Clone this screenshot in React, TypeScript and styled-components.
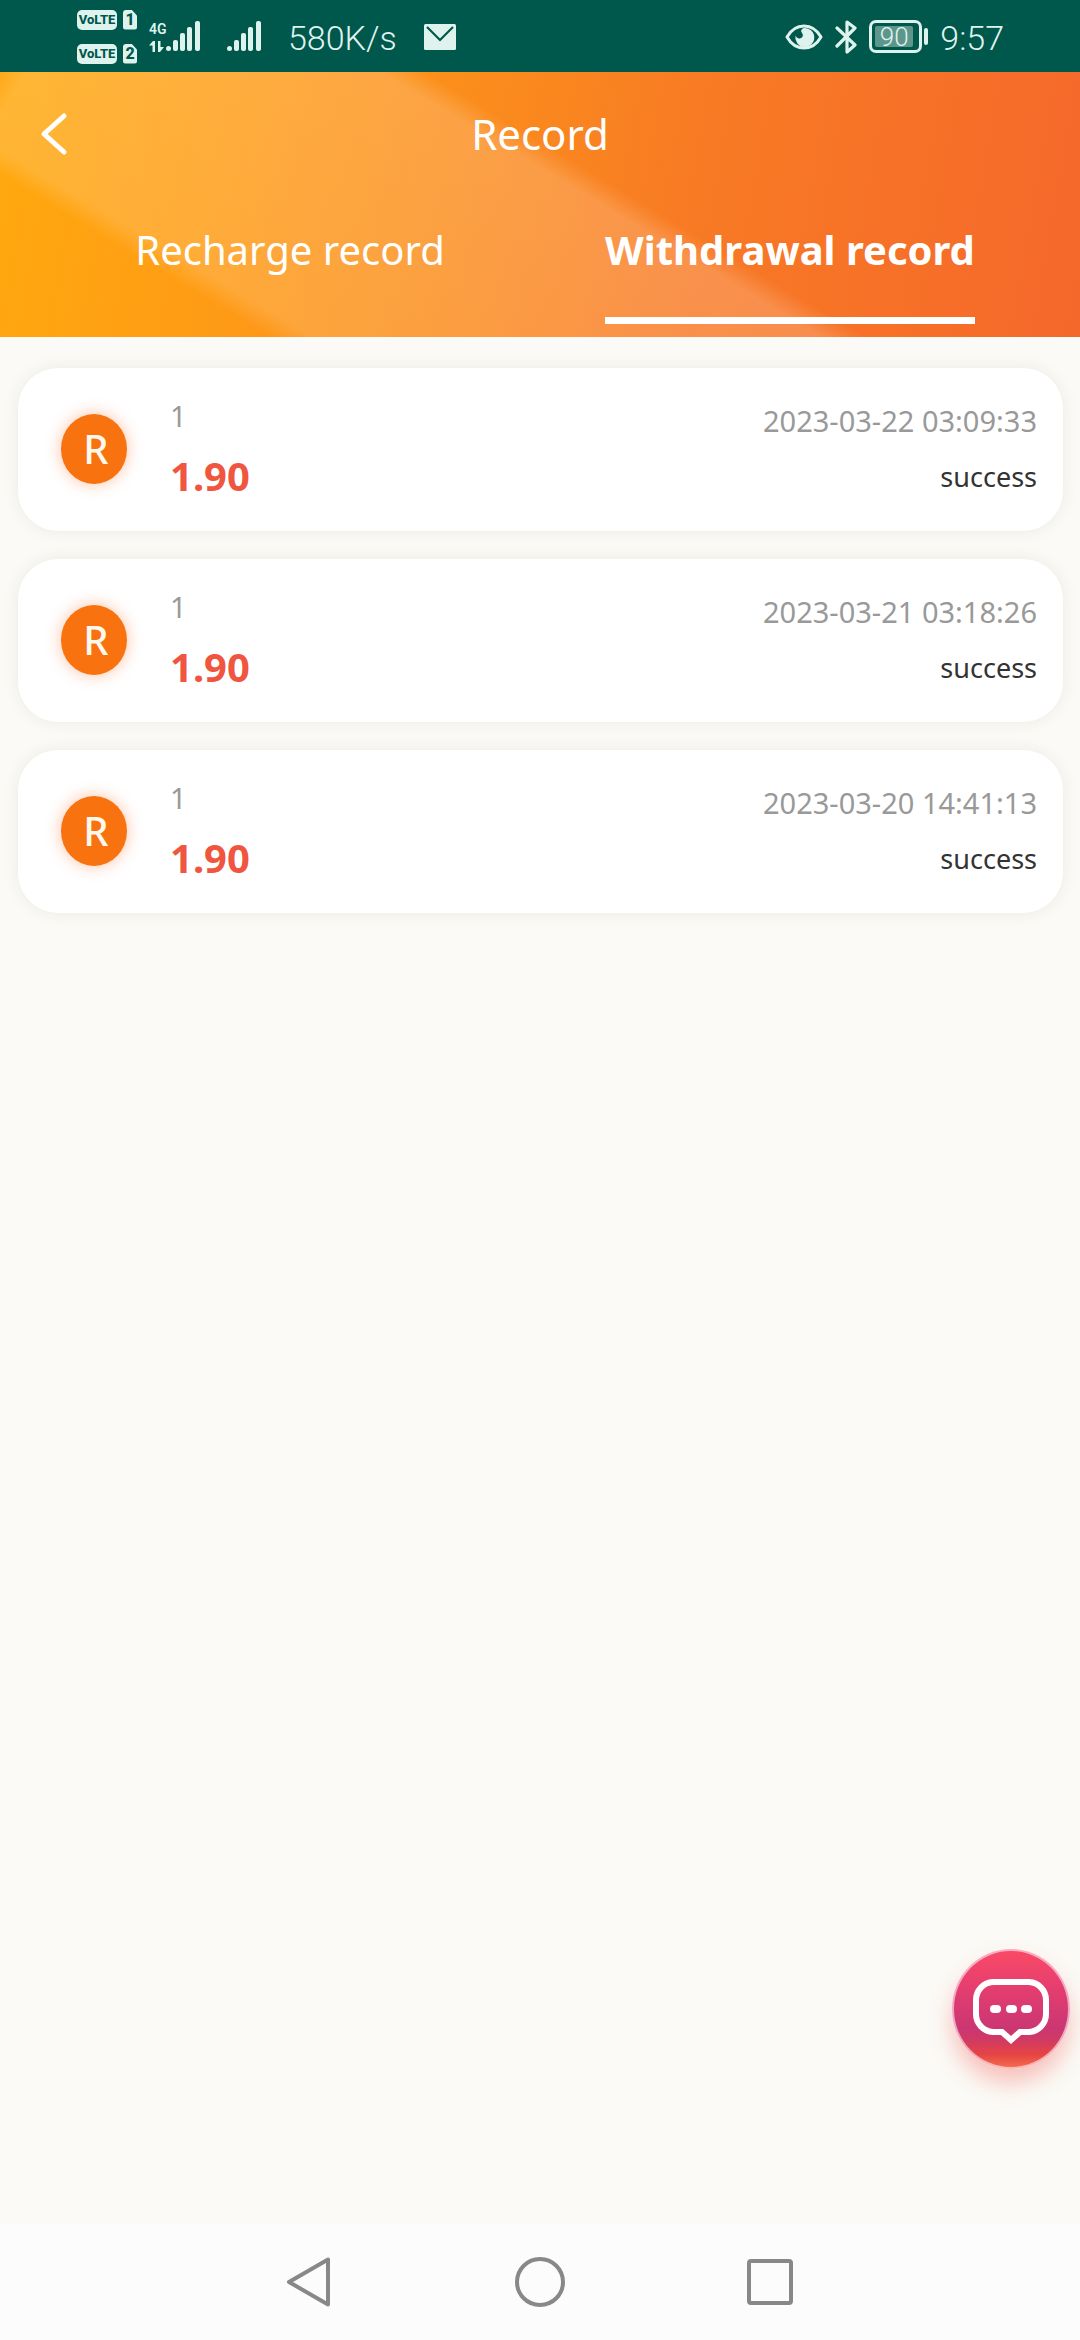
import React, { useState } from "react";
import styled, { createGlobalStyle } from "styled-components";

const GlobalStyle = createGlobalStyle`
  * { box-sizing: border-box; }
  body {
    margin: 0;
    background: #fbfaf6;
    font-family: "Noto Sans", "Open Sans", Roboto, sans-serif;
  }
  button {
    font: inherit;
    color: inherit;
    background: none;
    border: 0;
    padding: 0;
    cursor: pointer;
  }
`;

const ink = "#dff3ee";

const Page = styled.div`
  min-height: 100vh;
  display: flex;
  flex-direction: column;
`;

const StatusBar = styled.div`
  height: 72px;
  padding: 1px 76px 0 77px;
  display: flex;
  justify-content: space-between;
  align-items: center;
  background: #00574b;
  color: ${ink};
`;

const StatusGroup = styled.div<{ $gap: number }>`
  display: flex;
  align-items: center;
  gap: ${(p) => p.$gap}px;
`;

const StatusText = styled.span`
  padding-top: 2px;
  font-family: Roboto, sans-serif;
  font-weight: 300;
  font-size: 34px;
  line-height: 40px;
`;

const SimStack = styled.div`
  display: flex;
  flex-direction: column;
  gap: 14px;
`;

const SimLine = styled.div`
  display: flex;
  gap: 6px;
  font-family: Roboto, sans-serif;
  font-weight: 800;
  line-height: 20px;
  text-align: center;
  color: #00574b;
`;

const Volte = styled.span`
  width: 40px;
  height: 20px;
  border-radius: 5px;
  background: ${ink};
  font-size: 13px;
`;

const SimNumber = styled.span`
  width: 14px;
  height: 20px;
  border-radius: 3px;
  background: ${ink};
  clip-path: polygon(0 0, 60% 0, 100% 30%, 100% 100%, 0 100%);
  font-size: 16px;
`;

const NetworkType = styled.div`
  width: 17px;
  display: flex;
  flex-direction: column;
  gap: 4px;
  font-family: Roboto, sans-serif;
  font-weight: 600;
  font-size: 14px;
  line-height: 16px;
`;

const Network = styled.div`
  display: flex;
  align-items: flex-end;
`;

const Battery = styled.div`
  display: flex;
  align-items: center;
  gap: 2px;
`;

const BatteryBody = styled.div`
  width: 53px;
  height: 33px;
  padding: 3px;
  border: 3px solid ${ink};
  border-radius: 7px;
`;

const BatteryLevel = styled.div`
  width: 38px;
  height: 21px;
  border-radius: 2px;
  background: #5f968c;
  font-family: Roboto, sans-serif;
  font-weight: 300;
  font-size: 26px;
  line-height: 22px;
  text-align: center;
`;

const BatteryTip = styled.div`
  width: 4px;
  height: 17px;
  border-radius: 2px;
  background: ${ink};
`;

const Header = styled.header`
  height: 265px;
  display: flex;
  flex-direction: column;
  color: #fff;
  background:
    linear-gradient(120deg, rgba(255, 165, 16, 0.8) 0, rgba(255, 165, 16, 0) 22px),
    linear-gradient(31deg, transparent 139px, rgba(255, 255, 255, 0.15) 161px, rgba(255, 255, 255, 0.18) 423px, transparent 446px),
    linear-gradient(100deg, #ffa90e 0%, #ff9d15 20%, #fb8d1c 42%, #f87a24 64%, #f5682b 100%);
`;

const TitleBar = styled.div`
  height: 124px;
  padding: 0 36px;
  display: grid;
  grid-template-columns: 44px 1fr 44px;
  align-items: center;
`;

const BackButton = styled.button`
  height: 60px;
  display: flex;
  align-items: center;
`;

const Title = styled.h1`
  margin: 0;
  font-size: 42px;
  font-weight: 400;
  line-height: 60px;
  text-align: center;
`;

const Tabs = styled.div`
  flex: 1;
  padding: 0 40px;
  display: grid;
  grid-template-columns: 1fr 1fr;
  justify-items: center;
`;

const Tab = styled.button<{ $active: boolean }>`
  height: 128px;
  padding: 24px 0 0;
  display: flex;
  align-items: flex-start;
  font-size: 40px;
  line-height: 60px;
  font-weight: ${(p) => (p.$active ? 700 : 400)};
  border-bottom: 7px solid ${(p) => (p.$active ? "#fff" : "transparent")};
`;

const List = styled.ul`
  flex: 1;
  margin: 0;
  padding: 31px 17px 31px 18px;
  display: flex;
  flex-direction: column;
  gap: 28px;
  list-style: none;
`;

const Card = styled.li`
  height: 163px;
  padding: 0 26px 2px 43px;
  display: flex;
  align-items: center;
  gap: 43px;
  border-radius: 40px;
  background: #fff;
  box-shadow: 0 0 16px rgba(60, 50, 20, 0.08);
`;

const Avatar = styled.span`
  width: 66px;
  height: 70px;
  padding-left: 4px;
  border-radius: 50%;
  background: #f8730f;
  box-shadow: 0 0 16px rgba(248, 100, 30, 0.4);
  color: #fff8ec;
  font-size: 40px;
  font-weight: 500;
  line-height: 70px;
  text-align: center;
`;

const Column = styled.div<{ $gap: number; $end?: boolean }>`
  display: flex;
  flex-direction: column;
  gap: ${(p) => p.$gap}px;
  margin-left: ${(p) => (p.$end ? "auto" : "0")};
  text-align: ${(p) => (p.$end ? "right" : "left")};
`;

const Muted = styled.span`
  color: #999;
  font-size: 29px;
  line-height: 44px;
`;

const Amount = styled.strong`
  color: #ef553f;
  font-size: 40px;
  line-height: 56px;
  font-weight: 700;
`;

const Status = styled.span`
  color: #333;
  font-size: 27px;
  line-height: 44px;
`;

const ChatButton = styled.button`
  position: fixed;
  right: 10px;
  bottom: 271px;
  width: 118px;
  height: 120px;
  display: grid;
  place-items: center;
  border-radius: 50%;
  border: 2px solid rgba(255, 225, 240, 0.65);
  background: linear-gradient(#fb4a66 0%, #e33d70 35%, #cb3672 66%, #d03a62 76%, #e64444 88%, #f4714d 100%) border-box;
  box-shadow: 0 14px 22px rgba(240, 90, 80, 0.35);
`;

const ChatIcon = styled.svg`
  margin-top: 4px;
`;

const NavBar = styled.nav`
  height: 116px;
  display: flex;
  justify-content: center;
  align-items: center;
  gap: 178px;
  background: #fcfcfc;
`;

const NavButton = styled.button`
  width: 52px;
  height: 52px;
`;

const SignalBars = () => (
  <svg width="34" height="31" viewBox="0 0 34 31" fill={ink} aria-hidden="true">
    <rect x="0" y="25" width="5" height="5" rx="2.5" />
    <rect x="7" y="19" width="5" height="11" rx="2" />
    <rect x="14" y="12" width="5" height="18" rx="2" />
    <rect x="21" y="6" width="5" height="24" rx="2" />
    <rect x="29" y="0" width="5" height="30" rx="2" />
  </svg>
);

const records = [
  { id: "1", amount: "1.90", time: "2023-03-22 03:09:33", status: "success" },
  { id: "1", amount: "1.90", time: "2023-03-21 03:18:26", status: "success" },
  { id: "1", amount: "1.90", time: "2023-03-20 14:41:13", status: "success" },
];

const tabs = ["Recharge record", "Withdrawal record"];

export default function App() {
  const [active, setActive] = useState(1);

  return (
    <Page>
      <GlobalStyle />
      <StatusBar>
        <StatusGroup $gap={27}>
          <StatusGroup $gap={12}>
            <SimStack>
              <SimLine>
                <Volte>VoLTE</Volte>
                <SimNumber>1</SimNumber>
              </SimLine>
              <SimLine>
                <Volte>VoLTE</Volte>
                <SimNumber>2</SimNumber>
              </SimLine>
            </SimStack>
            <Network>
              <NetworkType>
                4G
                <svg width="15" height="11" viewBox="0 0 15 11" fill={ink} aria-hidden="true">
                  <path d="M0 4.5 4 0h2v11H3.5V4.5ZM9 0h2.5v6H15L11 11H9Z" />
                </svg>
              </NetworkType>
              <SignalBars />
            </Network>
          </StatusGroup>
          <SignalBars />
          <StatusText>580K/s</StatusText>
          <svg width="32" height="26" viewBox="0 0 32 26" aria-hidden="true">
            <rect width="32" height="26" rx="1.5" fill={ink} />
            <path d="M3 3 16 16 29 3" fill="none" stroke="#00574b" strokeWidth="2.2" />
          </svg>
        </StatusGroup>
        <StatusGroup $gap={12}>
          <svg width="38" height="26" viewBox="0 0 38 26" aria-hidden="true">
            <path d="M2 13C6 6 12 2 19 2s13 4 17 11c-4 7-10 11-17 11S6 20 2 13Z" fill="none" stroke={ink} strokeWidth="3" strokeLinejoin="round" />
            <path d="M19 4a9.500 9.500 0 1 1-8.500 7.500c1 2.500 3 3.500 5 2.800 3-1 2.800-4 1.200-5.800C15.500 7 16.500 4.500 19 4Z" fill={ink} />
          </svg>
          <svg width="22" height="34" viewBox="0 0 22 34" fill="none" stroke={ink} strokeWidth="3.200" strokeLinejoin="round" strokeLinecap="round" aria-hidden="true">
            <path d="M2 8 20 25l-8 7V2l8 6L2 26" />
          </svg>
          <Battery>
            <BatteryBody>
              <BatteryLevel>90</BatteryLevel>
            </BatteryBody>
            <BatteryTip />
          </Battery>
          <StatusText>9:57</StatusText>
        </StatusGroup>
      </StatusBar>

      <Header>
        <TitleBar>
          <BackButton aria-label="Back">
            <svg width="34" height="44" viewBox="0 0 34 44" fill="none" stroke="#fff" strokeWidth="5" strokeLinecap="round" strokeLinejoin="round" aria-hidden="true">
              <path d="M28 4 8 22 28 40" />
            </svg>
          </BackButton>
          <Title>Record</Title>
        </TitleBar>
        <Tabs role="tablist">
          {tabs.map((label, i) => (
            <Tab key={label} role="tab" aria-selected={i === active} $active={i === active} onClick={() => setActive(i)}>
              {label}
            </Tab>
          ))}
        </Tabs>
      </Header>

      <List>
        {records.map((r) => (
          <Card key={r.time}>
            <Avatar>R</Avatar>
            <Column $gap={10}>
              <Muted>{r.id}</Muted>
              <Amount>{r.amount}</Amount>
            </Column>
            <Column $gap={12} $end>
              <Muted>{r.time}</Muted>
              <Status>{r.status}</Status>
            </Column>
          </Card>
        ))}
      </List>

      <ChatButton aria-label="Chat">
        <ChatIcon width="80" height="66" viewBox="0 0 80 66" aria-hidden="true">
          <path d="M22 4H58A18 18 0 0 1 75 22V36A18 18 0 0 1 58 54H49L40 62 31 54H22A18 18 0 0 1 5 36V22A18 18 0 0 1 22 4Z" fill="none" stroke="#fff" strokeWidth="6" />
          <g fill="#fff">
            <rect x="19" y="27" width="11" height="8" rx="4" />
            <rect x="35" y="27" width="11" height="8" rx="4" />
            <rect x="50" y="27" width="11" height="8" rx="4" />
          </g>
        </ChatIcon>
      </ChatButton>

      <NavBar>
        <NavButton aria-label="Back">
          <svg width="52" height="52" viewBox="0 0 52 52" fill="none" stroke="#888" strokeWidth="4" strokeLinejoin="round">
            <path d="M44 3.500V48.500L5 26Z" />
          </svg>
        </NavButton>
        <NavButton aria-label="Home">
          <svg width="52" height="52" viewBox="0 0 52 52" fill="none" stroke="#888" strokeWidth="4">
            <circle cx="26" cy="26" r="23" />
          </svg>
        </NavButton>
        <NavButton aria-label="Recent apps">
          <svg width="52" height="52" viewBox="0 0 52 52" fill="none" stroke="#888" strokeWidth="4">
            <rect x="5" y="5" width="42" height="42" rx="2" />
          </svg>
        </NavButton>
      </NavBar>
    </Page>
  );
}
